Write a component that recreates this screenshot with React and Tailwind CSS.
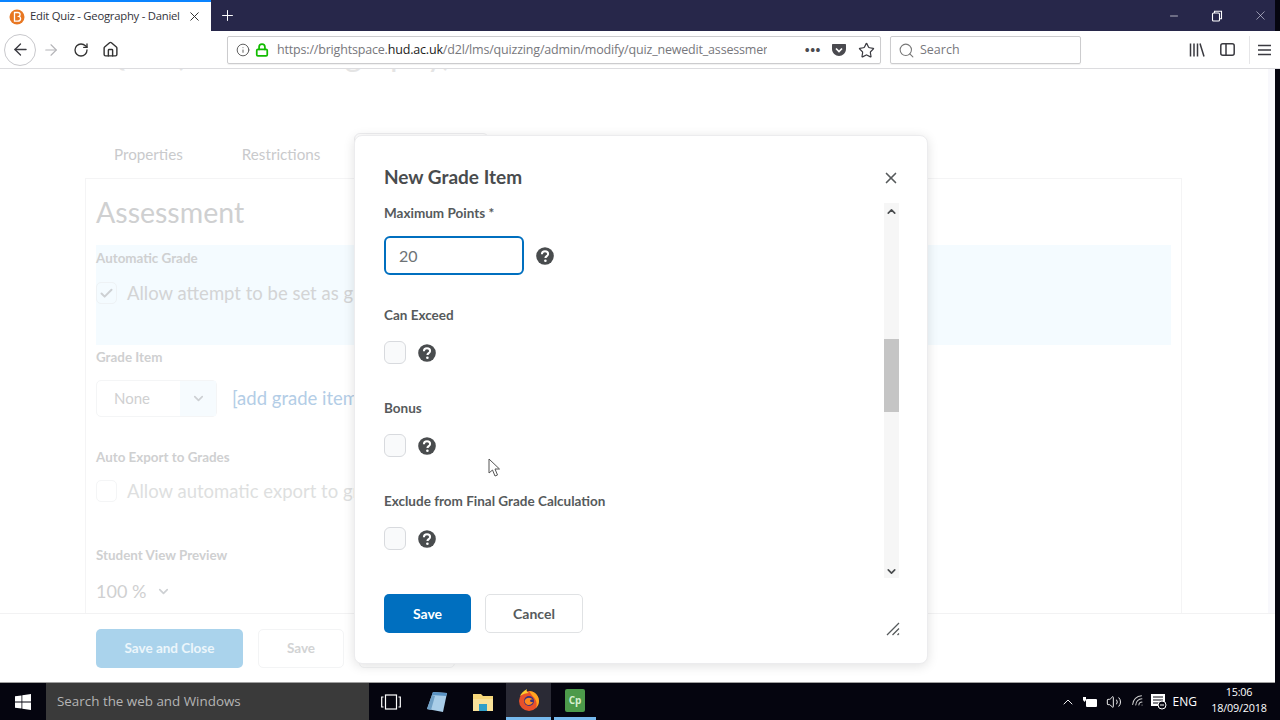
import React from "react";
import { ArrowLeft, ArrowRight, RotateCw, Home, Info, Lock, Star, Search, X, Plus, ChevronDown, ChevronUp, Check, Minus, ChevronUp as TrayUp, Volume2, Wifi } from "lucide-react";

const lato = "font-['Lato','Noto_Sans',sans-serif]";

const HelpIcon = () => (
  <svg width="18" height="18" viewBox="0 0 18 18" className="shrink-0">
    <circle cx="9" cy="9" r="8.800" fill="#494c4e" />
    <path d="M5.900 7.200c0-1.900 1.300-3 3.100-3s3.100 1.100 3.100 2.700c0 2.100-2.700 2.300-2.700 4.200" fill="none" stroke="#fff" strokeWidth="2" />
    <circle cx="9.400" cy="13.800" r="1.300" fill="#fff" />
  </svg>
);

const CheckRow = () => (
  <div className="flex items-center gap-[12px]">
    <div className="w-[22px] h-[23px] rounded-[6px] border border-[#d8dade] bg-[#f9fafb]" />
    <HelpIcon />
  </div>
);

const Favicon = () => (
  <svg width="16" height="16" viewBox="0 0 16 16" className="shrink-0">
    <circle cx="8" cy="8" r="7.500" fill="#e87722" />
    <path d="M5.500 3.500h3.200c1.600 0 2.400.9 2.400 2 0 .9-.5 1.500-1.200 1.800 1 .3 1.700 1 1.700 2.200 0 1.600-1.200 2.700-3 2.700H5.500z" fill="none" stroke="#fff" strokeWidth="1.300" />
  </svg>
);

const FirefoxIcon = () => (
  <svg width="24" height="24" viewBox="0 0 24 24">
    <circle cx="12" cy="13" r="10" fill="#e8502a" />
    <path d="M12 3c5 0 10 4 10 10 0 2-1 5-3 7 1-3 1-6-1-9-1-2-3-3-4-5z" fill="#ffa51f" />
    <path d="M3 8c1-2 3-5 7-7-1 2 0 3 2 4-3 0-6 1-9 3z" fill="#ffcb2e" />
    <circle cx="12" cy="13" r="5" fill="#39327e" />
    <path d="M8 12c2-3 6-3 8 0-2-1-3 0-3 1s2 1 3 1c-1 3-5 4-7 2-1-1-2-3-1-4z" fill="#ff8a1f" />
  </svg>
);

export default function App() {
  return (
    <div className={`relative w-[1280px] h-[720px] overflow-hidden flex flex-col bg-white ${lato}`}>
      {/* Browser tabs */}
      <div className="h-[31px] shrink-0 flex items-stretch bg-[#27274a] font-['Open_Sans',sans-serif]">
        <div className="w-[211px] bg-white border-t-2 border-[#0a84ff] flex items-center pl-[9px] pr-[9px]">
          <Favicon />
          <span className="ml-[5px] w-[151px] overflow-hidden whitespace-nowrap text-[11.300px] tracking-[-0.25px] text-[#33333a]">Edit Quiz - Geography - Daniel</span>
          <X size={15} strokeWidth={1.6} className="ml-auto text-[#333]" />
        </div>
        <div className="w-[32px] flex items-center justify-center">
          <Plus size={17} strokeWidth={1.4} className="text-white" />
        </div>
        <div className="ml-auto flex items-center text-white">
          <Minus size={12} strokeWidth={1.3} className="mr-[31px]" />
          <svg width="12" height="12" viewBox="0 0 12 12" className="mr-[30px]" fill="none" stroke="#fff" strokeWidth="1.100">
            <rect x="1.500" y="3" width="7" height="8" rx="1" />
            <path d="M3.500 3V1.200h7v7.600H8.500" />
          </svg>
          <X size={15} strokeWidth={1} className="mr-[12px] text-[#d8d8e8]" />
        </div>
      </div>

      {/* Browser toolbar */}
      <div className="relative z-10 h-[38px] shrink-0 flex items-center bg-white border-b border-[#dcdcdf] pl-[4px] pr-[8px] font-['Open_Sans',sans-serif]">
        <div className="w-[32px] h-[32px] rounded-full border border-[#c8c8cc] flex items-center justify-center">
          <ArrowLeft size={19} strokeWidth={1.7} className="text-[#3a3a40]" />
        </div>
        <ArrowRight size={18} strokeWidth={1.5} className="ml-[6px] text-[#b4b4b8]" />
        <RotateCw size={16} strokeWidth={2} className="ml-[13px] text-[#333]" />
        <Home size={17} strokeWidth={2} className="ml-[13px] text-[#333]" />
        <div className="ml-[108px] mt-[1px] w-[654px] h-[28px] flex items-center border border-[#ccccce] rounded-[2px] pl-[8px] pr-[5px] shadow-[0_1px_1px_rgba(0,0,0,0.06)]">
          <Info size={14} strokeWidth={1.6} className="text-[#555] shrink-0" />
          <Lock size={14} strokeWidth={3} className="ml-[5px] text-[#12bc00] shrink-0" />
          <span className="ml-[8px] w-[490px] overflow-hidden whitespace-nowrap text-[12.500px] tracking-[-0.18px] text-[#77777c]">
            https://brightspace.<span className="text-[#222]">hud.ac.uk</span>/d2l/lms/quizzing/admin/modify/quiz_newedit_assessmer
          </span>
          <span className="ml-auto text-[13px] font-bold leading-none text-[#4a4a4f] tracking-[0.5px]">•••</span>
          <svg width="16" height="16" viewBox="0 0 16 16" className="ml-[10px]">
            <path d="M2 2h12c.8 0 1 .5 1 1v4c0 4-3.500 7-7 7s-7-3-7-7V3c0-.5.2-1 1-1z" fill="#4a4a4f" />
            <path d="M5 6.500l3 3 3-3" fill="none" stroke="#fff" strokeWidth="1.700" />
          </svg>
          <Star size={17} strokeWidth={1.7} className="ml-[11px] text-[#3a3a40]" />
        </div>
        <div className="ml-[9px] mt-[1px] w-[191px] h-[28px] flex items-center border border-[#ccccce] rounded-[2px] pl-[7px] shadow-[0_1px_1px_rgba(0,0,0,0.06)]">
          <Search size={17} strokeWidth={1.5} className="text-[#777]" />
          <span className="ml-[5px] text-[12.500px] text-[#77777c]">Search</span>
        </div>
        <svg width="16" height="14" viewBox="0 0 16 14" className="ml-[108px]" fill="none" stroke="#3a3a40" strokeWidth="1.500">
          <path d="M1.500 0.500v13M5 0.500v13M8.500 0.500v13M11 0.500l4 13" />
        </svg>
        <svg width="15" height="13" viewBox="0 0 15 13" className="ml-[15px]" fill="none" stroke="#3a3a40" strokeWidth="1.500">
          <rect x="0.800" y="0.800" width="13.400" height="11.400" rx="2" />
          <path d="M6 1v11" />
        </svg>
        <div className="ml-[14px] w-px h-[28px] bg-[#e6e6e8]" />
        <svg width="13" height="12" viewBox="0 0 13 12" className="ml-[8px]" stroke="#3a3a40" strokeWidth="1.500">
          <path d="M0 1.500h13M0 6h13M0 10.500h13" />
        </svg>
      </div>

      {/* Dimmed quiz page */}
      <div className="relative flex-1 min-h-0 flex flex-col overflow-hidden">
        <div className="flex-1 min-h-0 overflow-hidden pl-[85px] pr-[98px]">
          <div className="h-[99px] -mt-[37px] pl-[14px] text-[33px] leading-[42px] text-[#e4e4e4] whitespace-nowrap">Quiz (Daniel Geography)</div>
          <div className="flex gap-[59px] pl-[29px] h-[47px] pt-[11px] text-[15.200px] leading-[24px] text-[#c9cacc]">
            <span>Properties</span>
            <span>Restrictions</span>
            <span className="w-[135px] h-[40px] -mt-[9px] -ml-[25px] rounded-t-[6px] border border-[#eeeef0]" />
          </div>
          <div className="border border-[#f4f4f5] border-b-0 h-[500px] px-[10px] pt-[17px]">
            <div className="text-[28.500px] leading-[32px] text-[#cfd0d1]">Assessment</div>
            <div className="mt-[17px] h-[100px] bg-[#f4fbff] pt-[5px]">
              <div className="text-[13.400px] font-bold leading-[16px] text-[#cfd0d1]">Automatic Grade</div>
              <div className="mt-[15px] flex items-center gap-[10px] text-[18.500px] leading-[24px] text-[#d3d4d5] whitespace-nowrap">
                <div className="w-[21px] h-[22px] flex items-center justify-center rounded-[5px] border border-[#eef2f5]">
                  <Check size={15} strokeWidth={3.2} className="text-[#cdd0d3]" />
                </div>
                Allow attempt to be set as graded immediately
              </div>
            </div>
            <div className="mt-[4px] text-[13.400px] font-bold leading-[16px] text-[#cfd0d1]">Grade Item</div>
            <div className="mt-[15px] flex items-center gap-[15px] whitespace-nowrap">
              <div className="w-[121px] h-[37px] flex rounded-[5px] border border-[#f4f5f6] text-[15px] text-[#cfd0d1]">
                <span className="flex-1 flex items-center pl-[17px]">None</span>
                <span className="w-[36px] flex items-center justify-center bg-[#f6fbfe]">
                  <ChevronDown size={15} strokeWidth={2.6} className="text-[#cdd0d3]" />
                </span>
              </div>
              <span className="text-[18.500px] text-[#b3cde6]">[add grade item]</span>
            </div>
            <div className="mt-[32px] text-[13.400px] font-bold leading-[16px] text-[#cfd0d1]">Auto Export to Grades</div>
            <div className="mt-[14px] flex items-center gap-[10px] text-[18.500px] leading-[24px] text-[#dedfe0] whitespace-nowrap">
              <div className="w-[21px] h-[22px] rounded-[5px] border border-[#f4f5f6]" />
              Allow automatic export to grades
            </div>
            <div className="mt-[44px] text-[13.400px] font-bold leading-[16px] text-[#cfd0d1]">Student View Preview</div>
            <div className="mt-[16px] flex items-center gap-[10px] text-[18px] leading-[24px] text-[#cfd0d1]">
              100 %
              <ChevronDown size={15} strokeWidth={2.6} className="text-[#cdd0d3]" />
            </div>
          </div>
        </div>
        <div className="relative h-[69px] shrink-0 flex items-center gap-[15px] pl-[96px] bg-white border-t border-[#f2f2f3] text-[13.500px] font-bold">
          <div className="w-[147px] h-[39px] flex items-center justify-center rounded-[5px] bg-[#aad3ec] text-[#ecf6fb]">Save and Close</div>
          <div className="w-[86px] h-[39px] flex items-center justify-center rounded-[5px] border border-[#f3f4f5] text-[#d2d3d4]">Save</div>
          <div className="w-[96px] h-[39px] rounded-[5px] border border-[#f3f4f5]" />
        </div>
        {/* Page scrollbar strip */}
        <div className="absolute right-[5px] top-0 bottom-[69px] w-[7px] bg-[#f8f8fc]" />

        {/* New Grade Item dialog */}
        <div className="absolute left-[354px] top-[66px] w-[574px] h-[529px] flex flex-col rounded-[8px] bg-white border border-[#ececee] shadow-[0_2px_12px_rgba(0,0,0,0.12)] pl-[29px] pr-[28px]">
          <div className="h-[67px] shrink-0 flex items-center justify-between pt-[15px]">
            <span className="text-[19px] font-bold text-[#494c4e]">New Grade Item</span>
            <X size={18} strokeWidth={2.2} className="-mr-[1px] mt-[2px] text-[#565a5c]" />
          </div>
          <div className="h-[375px] shrink-0 flex">
            <div className="flex-1 text-[13.500px] font-bold leading-[18px] text-[#565a5c]">
              <div className="mt-[1px]">Maximum Points *</div>
              <div className="mt-[14px] flex items-center gap-[12px]">
                <div className="w-[140px] h-[39px] flex items-center pl-[13px] rounded-[6px] border-2 border-[#006fbf] text-[16px] font-normal text-[#6e7376]">20</div>
                <HelpIcon />
              </div>
              <div className="mt-[31px]">Can Exceed</div>
              <div className="mt-[17px]"><CheckRow /></div>
              <div className="mt-[35px]">Bonus</div>
              <div className="mt-[17px]"><CheckRow /></div>
              <div className="mt-[35px]">Exclude from Final Grade Calculation</div>
              <div className="mt-[17px]"><CheckRow /></div>
            </div>
            <div className="w-[15px] flex flex-col bg-[#f6f6f6]">
              <div className="h-[136px] pt-[2px] flex justify-center">
                <ChevronUp size={13} strokeWidth={3} className="text-[#494c4e]" />
              </div>
              <div className="h-[73px] bg-[#c5c5c5]" />
              <div className="flex-1 flex items-end justify-center">
                <ChevronDown size={13} strokeWidth={3} className="text-[#494c4e]" />
              </div>
            </div>
          </div>
          <div className="flex-1 relative flex items-start gap-[14px] pt-[16px] text-[14px] font-bold">
            <div className="w-[87px] h-[39px] flex items-center justify-center rounded-[5px] bg-[#006fbf] text-white">Save</div>
            <div className="w-[98px] h-[39px] flex items-center justify-center rounded-[5px] border border-[#e0e2e4] text-[#565a5c]">Cancel</div>
            <svg width="14" height="14" viewBox="0 0 14 14" className="absolute -right-[1px] top-[44px]" stroke="#565a5c" strokeWidth="1.300" fill="none">
              <path d="M1 13L13 1M6.500 13L13 6.500M11.500 13L13 11.500" />
            </svg>
          </div>
        </div>

        {/* Mouse pointer */}
        <svg width="13" height="20" viewBox="0 0 13 20" className="absolute left-[488px] top-[389px]">
          <path d="M1 1v14l3.500-3 2.500 6 2.500-1-2.500-6h4.500z" fill="#fff" stroke="#555" strokeWidth="1" />
        </svg>
      </div>

      {/* Windows taskbar */}
      <div className="h-[38px] shrink-0 flex items-stretch bg-[#05050f] border-t border-[#a0a0a0] font-['Open_Sans',sans-serif]">
        <div className="w-[46px] flex items-center justify-center">
          <svg width="16" height="16" viewBox="0 0 16 16" fill="#fff">
            <path d="M0 2.300l6.500-.9v6.200H0zM7.300 1.300L16 0v7.600H7.300zM0 8.400h6.500v6.200L0 13.700zM7.300 8.400H16V16l-8.700-1.300z" />
          </svg>
        </div>
        <div className="w-[323px] flex items-center pl-[11px] bg-[#3a3a3a] text-[13.400px] text-[#b4b4b4]">Search the web and Windows</div>
        <div className="w-[44px] flex items-center justify-center">
          <svg width="20" height="16" viewBox="0 0 20 16" fill="none" stroke="#fff" strokeWidth="1.200">
            <rect x="4.500" y="1" width="11" height="14" />
            <path d="M2.500 3H0.700v10h1.800M17.500 3h1.800v10h-1.800" />
          </svg>
        </div>
        <div className="w-[47px] flex items-center justify-center">
          <svg width="22" height="24" viewBox="0 0 22 24">
            <path d="M7 2l14 1-4 19-16-3z" fill="#a9cde8" />
            <path d="M7 2l14 1-1 3-14-1z" fill="#5a93c4" />
            <path d="M1 19l5-14 3 1-4 14z" fill="#6f9fc5" />
          </svg>
        </div>
        <div className="w-[46px] flex items-center justify-center">
          <svg width="22" height="20" viewBox="0 0 22 20">
            <path d="M1 2h8l2 2h10v15H1z" fill="#f6d77a" />
            <rect x="1" y="7" width="20" height="12" fill="#f9e29a" />
            <rect x="7" y="12" width="8" height="7" fill="#2f9fc9" />
          </svg>
        </div>
        <div className="w-[45px] flex items-center justify-center bg-[#2a2a35] border-b-[3px] border-[#76b9ed]">
          <FirefoxIcon />
        </div>
        <div className="ml-[3px] w-[42px] flex items-center justify-center border-b-[3px] border-[#76b9ed]">
          <div className="w-[20px] h-[23px] flex items-center justify-center rounded-[2px] bg-[#4c9a4a] text-[10px] font-bold text-[#d5efcf]">Cp</div>
        </div>
        <div className="ml-auto flex items-center pr-[8px] text-white">
          <TrayUp size={16} strokeWidth={1.4} className="mr-[6px]" />
          <svg width="16" height="12" viewBox="0 0 16 12" className="mr-[8px]" fill="#fff">
            <rect x="4" y="3" width="11" height="8" rx="1" />
            <path d="M1 1v3l1.500 2L4 4V1z" />
          </svg>
          <Volume2 size={16} strokeWidth={1.4} className="mr-[9px]" />
          <Wifi size={15} strokeWidth={1.6} className="mr-[4px] -rotate-45 text-[#d0d0d0]" />
          <svg width="17" height="17" viewBox="0 0 17 17" className="mr-[6px]">
            <rect x="1" y="1" width="14" height="12" fill="#fff" />
            <path d="M3 4h10M3 7h10M3 10h6" stroke="#05050f" strokeWidth="1" />
            <circle cx="12" cy="12" r="4" fill="#05050f" stroke="#fff" strokeWidth="1" />
            <path d="M10 12h4" stroke="#fff" />
          </svg>
          <span className="text-[12px] text-white mr-[9px]">ENG</span>
          <div className="w-[66px] -mt-[4px] text-center text-[10.800px] leading-[16px] tracking-[-0.2px] text-white">
            <div>15:06</div>
            <div>18/09/2018</div>
          </div>
        </div>
      </div>

      {/* Dark strip down the right of the capture */}
      <div className="absolute right-0 top-0 bottom-0 w-[5px] bg-[#05050f]" />
    </div>
  );
}
